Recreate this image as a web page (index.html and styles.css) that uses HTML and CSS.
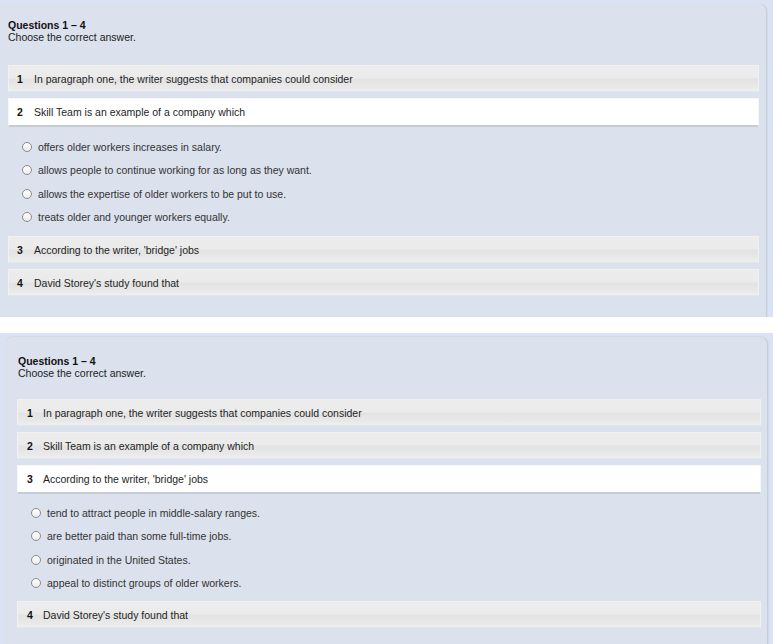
FILE: index.html
```html
<!DOCTYPE html>
<html lang="en">
<head>
<meta charset="utf-8">
<title>Questions 1 – 4</title>
<link rel="stylesheet" href="styles.css">
</head>
<body>
  <section class="shot shot-first">
    <div class="panel panel-first">
      <div class="intro">
        <div class="intro-title">Questions 1 – 4</div>
        <div class="intro-text">Choose the correct answer.</div>
      </div>
      <div class="questions">
        <div class="q-row"><span class="q-num">1</span><span class="q-text">In paragraph one, the writer suggests that companies could consider</span></div>
        <div class="q-row q-open"><span class="q-num">2</span><span class="q-text">Skill Team is an example of a company which</span></div>
        <ul class="options">
          <li class="option"><span class="radio"></span><span>offers older workers increases in salary.</span></li>
          <li class="option"><span class="radio"></span><span>allows people to continue working for as long as they want.</span></li>
          <li class="option"><span class="radio"></span><span>allows the expertise of older workers to be put to use.</span></li>
          <li class="option"><span class="radio"></span><span>treats older and younger workers equally.</span></li>
        </ul>
        <div class="q-row"><span class="q-num">3</span><span class="q-text">According to the writer, 'bridge' jobs</span></div>
        <div class="q-row"><span class="q-num">4</span><span class="q-text">David Storey's study found that</span></div>
      </div>
    </div>
  </section>

  <section class="shot shot-second">
    <div class="panel panel-second">
      <div class="intro">
        <div class="intro-title">Questions 1 – 4</div>
        <div class="intro-text">Choose the correct answer.</div>
      </div>
      <div class="questions">
        <div class="q-row"><span class="q-num">1</span><span class="q-text">In paragraph one, the writer suggests that companies could consider</span></div>
        <div class="q-row"><span class="q-num">2</span><span class="q-text">Skill Team is an example of a company which</span></div>
        <div class="q-row q-open"><span class="q-num">3</span><span class="q-text">According to the writer, 'bridge' jobs</span></div>
        <ul class="options">
          <li class="option"><span class="radio"></span><span>tend to attract people in middle-salary ranges.</span></li>
          <li class="option"><span class="radio"></span><span>are better paid than some full-time jobs.</span></li>
          <li class="option"><span class="radio"></span><span>originated in the United States.</span></li>
          <li class="option"><span class="radio"></span><span>appeal to distinct groups of older workers.</span></li>
        </ul>
        <div class="q-row"><span class="q-num">4</span><span class="q-text">David Storey's study found that</span></div>
      </div>
    </div>
  </section>
</body>
</html>
```

FILE: styles.css
```css
* { box-sizing: border-box; }

html, body {
  margin: 0;
  padding: 0;
  background: #ffffff;
}

body {
  width: 773px;
  height: 644px;
  overflow: hidden;
  font-family: "Liberation Sans", Arial, sans-serif;
  font-size: 10.5px;
  color: #1e1e1e;
}

.shot {
  background: #dae3f4;
  overflow: hidden;
}

.shot-first {
  height: 317px;
  padding: 4px 7px 0 0;
}

.shot-second {
  height: 311px;
  margin-top: 16px;
  padding: 4px 6px 0 5px;
}

.panel {
  background: #dbe1ed;
  border-radius: 0 7px 0 0;
  box-shadow: 1px 0 0 #c6ccd8, 2px 0 0 #d3dae8;
  height: 100%;
}

.shot-second .panel {
  border-radius: 7px 7px 0 0;
  box-shadow: 1px 0 0 #c6ccd8, 2px 0 0 #d3dae8, 0 -1px 0 #d4dbe8;
}

.panel-first {
  padding: 15px 7px 0 8px;
}

.panel-second {
  padding: 18px 6px 0 12px;
}

.intro {
  line-height: 12px;
}

.panel-second .intro {
  padding-left: 1px;
}

.intro-title {
  font-weight: bold;
  color: #111111;
}

.intro-text {
  color: #222222;
}

.questions {
  display: flex;
  flex-direction: column;
  gap: 6px;
}

.panel-first .questions {
  margin-top: 22px;
}

.panel-second .questions {
  margin-top: 20px;
}

.q-row {
  display: flex;
  align-items: center;
  height: 27px;
  padding-left: 8px;
  background: linear-gradient(#ececec 0%, #ebebeb 46%, #e3e3e3 54%, #e9e9e9 85%, #efefef 100%);
  border: 1px solid #f1f1f1;
  border-bottom-color: #e2e5ec;
  color: #1e1e1e;
}

.panel-second .q-row {
  padding-left: 9px;
}

.q-open {
  height: 29px;
  background: #ffffff;
  border: 1px solid #f6f7f9;
  border-bottom: 2px solid #c8cbd2;
}

.q-num {
  font-weight: bold;
  width: 17px;
  flex: none;
  color: #111111;
}

.panel-second .q-num {
  width: 16px;
}

.q-text {
  white-space: nowrap;
}

.options {
  list-style: none;
  margin: 2px 0 1px;
  padding: 0 0 0 14px;
  color: #333333;
}

.panel-second .options {
  margin: 1px 0 0;
}

.option {
  display: flex;
  align-items: center;
  height: 23.5px;
}

.radio {
  width: 10px;
  height: 10px;
  border-radius: 50%;
  border: 1px solid #8c8c8c;
  background: linear-gradient(#ffffff, #ececec);
  margin-right: 6px;
  flex: none;
}
```
